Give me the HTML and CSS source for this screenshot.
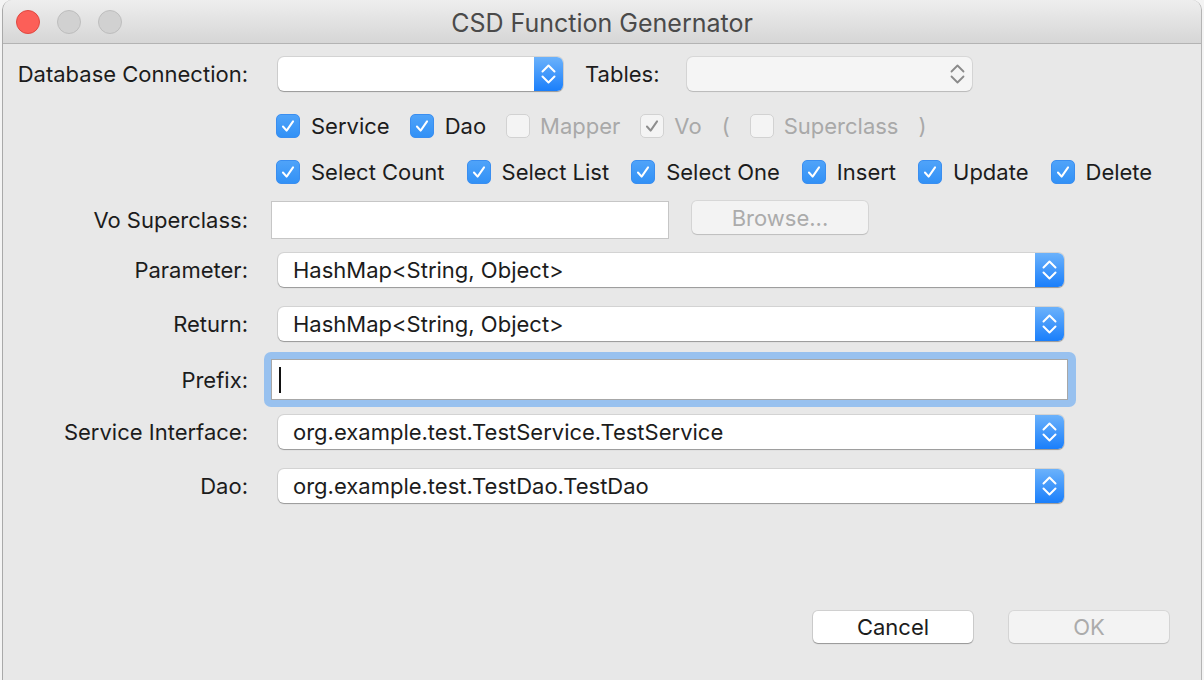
FILE: index.html
```html
<!DOCTYPE html>
<html>
<head>
<meta charset="utf-8">
<link rel="stylesheet" href="styles.css">
</head>
<body>
<div class="window">
  <div class="titlebar">
    <div class="lights">
      <span class="light close"></span>
      <span class="light off"></span>
      <span class="light off"></span>
    </div>
    <div class="title">CSD Function Genernator</div>
  </div>
  <div class="content">
    <div class="row r1">
      <div class="label">Database Connection:</div>
      <div class="combo small">
        <span class="combo-text"></span>
        <span class="stepper"><svg width="29" height="34" viewBox="0 0 29 34"><polyline points="8.5,14.5 14.5,8.5 20.5,14.5"/><polyline points="8.5,19.5 14.5,25.5 20.5,19.5"/></svg></span>
      </div>
      <div class="inline-label">Tables:</div>
      <div class="combo small disabled">
        <span class="combo-text"></span>
        <span class="stepper"><svg width="29" height="34" viewBox="0 0 29 34"><polyline points="8.5,14.5 14.5,8.5 20.5,14.5"/><polyline points="8.5,19.5 14.5,25.5 20.5,19.5"/></svg></span>
      </div>
    </div>

    <div class="row r2">
      <div class="label"></div>
      <div class="checks tight">
        <label class="check"><span class="box on"><svg viewBox="0 0 24 24"><polyline points="6.5,12.5 10.5,17 17.5,7"/></svg></span>Service</label>
        <label class="check"><span class="box on"><svg viewBox="0 0 24 24"><polyline points="6.5,12.5 10.5,17 17.5,7"/></svg></span>Dao</label>
        <label class="check dis"><span class="box"></span>Mapper</label>
        <label class="check dis"><span class="box"><svg viewBox="0 0 24 24"><polyline points="6.5,12.5 10.5,17 17.5,7"/></svg></span>Vo</label>
        <span class="paren dis">(</span>
        <label class="check dis"><span class="box"></span>Superclass</label>
        <span class="paren dis">)</span>
      </div>
    </div>

    <div class="row r3">
      <div class="label"></div>
      <div class="checks">
        <label class="check"><span class="box on"><svg viewBox="0 0 24 24"><polyline points="6.5,12.5 10.5,17 17.5,7"/></svg></span>Select Count</label>
        <label class="check"><span class="box on"><svg viewBox="0 0 24 24"><polyline points="6.5,12.5 10.5,17 17.5,7"/></svg></span>Select List</label>
        <label class="check"><span class="box on"><svg viewBox="0 0 24 24"><polyline points="6.5,12.5 10.5,17 17.5,7"/></svg></span>Select One</label>
        <label class="check"><span class="box on"><svg viewBox="0 0 24 24"><polyline points="6.5,12.5 10.5,17 17.5,7"/></svg></span>Insert</label>
        <label class="check"><span class="box on"><svg viewBox="0 0 24 24"><polyline points="6.5,12.5 10.5,17 17.5,7"/></svg></span>Update</label>
        <label class="check"><span class="box on"><svg viewBox="0 0 24 24"><polyline points="6.5,12.5 10.5,17 17.5,7"/></svg></span>Delete</label>
      </div>
    </div>

    <div class="row r4">
      <div class="label">Vo Superclass:</div>
      <div class="textfield short"></div>
      <div class="button disabled browse">Browse...</div>
    </div>

    <div class="row r5">
      <div class="label">Parameter:</div>
      <div class="combo wide">
        <span class="combo-text">HashMap&lt;String, Object&gt;</span>
        <span class="stepper"><svg width="29" height="34" viewBox="0 0 29 34"><polyline points="8.5,14.5 14.5,8.5 20.5,14.5"/><polyline points="8.5,19.5 14.5,25.5 20.5,19.5"/></svg></span>
      </div>
    </div>

    <div class="row r6">
      <div class="label">Return:</div>
      <div class="combo wide">
        <span class="combo-text">HashMap&lt;String, Object&gt;</span>
        <span class="stepper"><svg width="29" height="34" viewBox="0 0 29 34"><polyline points="8.5,14.5 14.5,8.5 20.5,14.5"/><polyline points="8.5,19.5 14.5,25.5 20.5,19.5"/></svg></span>
      </div>
    </div>

    <div class="row r7">
      <div class="label">Prefix:</div>
      <div class="focus-ring">
        <div class="textfield long"><span class="caret"></span></div>
      </div>
    </div>

    <div class="row r8">
      <div class="label">Service Interface:</div>
      <div class="combo wide">
        <span class="combo-text">org.example.test.TestService.TestService</span>
        <span class="stepper"><svg width="29" height="34" viewBox="0 0 29 34"><polyline points="8.5,14.5 14.5,8.5 20.5,14.5"/><polyline points="8.5,19.5 14.5,25.5 20.5,19.5"/></svg></span>
      </div>
    </div>

    <div class="row r9">
      <div class="label">Dao:</div>
      <div class="combo wide">
        <span class="combo-text">org.example.test.TestDao.TestDao</span>
        <span class="stepper"><svg width="29" height="34" viewBox="0 0 29 34"><polyline points="8.5,14.5 14.5,8.5 20.5,14.5"/><polyline points="8.5,19.5 14.5,25.5 20.5,19.5"/></svg></span>
      </div>
    </div>

    <div class="buttons">
      <div class="button">Cancel</div>
      <div class="button disabled">OK</div>
    </div>
  </div>
</div>
</body>
</html>
```

FILE: styles.css
```css
* { box-sizing: border-box; }
html, body {
  margin: 0;
  padding: 0;
  width: 1204px;
  height: 680px;
  overflow: hidden;
  background: #f4f4f4;
  font-family: Inter, "Liberation Sans", sans-serif;
  font-size: 22px;
  color: #1c1c1c;
}
.window {
  margin-left: 2px;
  width: 1200px;
  height: 680px;
  background: #e8e8e8;
  border-left: 1px solid #a9a9a9;
  border-right: 1px solid #b4b4b4;
  border-top-left-radius: 10px;
  border-top-right-radius: 10px;
  display: flex;
  flex-direction: column;
  overflow: hidden;
}
.titlebar {
  height: 44px;
  flex: none;
  background: linear-gradient(#eeeeee, #d6d6d6);
  border-bottom: 1px solid #b3b3b3;
  display: flex;
  align-items: center;
  position: relative;
}
.lights {
  display: flex;
  gap: 17px;
  padding-left: 13px;
}
.light {
  width: 24px;
  height: 24px;
  border-radius: 50%;
  display: block;
}
.light.close {
  background: #fc5f58;
  border: 1px solid #df4840;
}
.light.off {
  background: #d1d1d1;
  border: 1px solid #bdbdbd;
}
.title {
  position: absolute;
  left: 0;
  right: 0;
  top: 0;
  line-height: 46px;
  text-align: center;
  font-size: 25px;
  color: #4a4a4a;
}
.content {
  flex: 1;
  display: flex;
  flex-direction: column;
  padding-bottom: 37px;
}
.row {
  display: flex;
  align-items: center;
  height: 34px;
  flex: none;
}
.r1 { margin-top: 13px; }
.r2 { margin-top: 18px; }
.r3 { margin-top: 12px; }
.r4 { margin-top: 12px; height: 38px; }
.r5 { margin-top: 14px; }
.r6 { margin-top: 20px; }
.r7 { margin-top: 11px; height: 55px; }
.r8 { margin-top: 8px; }
.r9 { margin-top: 20px; }
.label {
  width: 245px;
  flex: none;
  text-align: right;
  white-space: nowrap;
  margin-right: 23px;
}
.combo {
  height: 34px;
  background: #fff;
  border-radius: 6px;
  box-shadow: 0 0 0 1px rgba(0,0,0,0.09), 0 1px 1px 0 rgba(0,0,0,0.28);
  display: flex;
  align-items: center;
  margin-left: 7px;
  flex: none;
}
.combo.small { width: 285px; }
.combo.wide { width: 786px; }
.combo-text {
  flex: 1;
  padding-left: 15px;
  white-space: nowrap;
}
.stepper {
  width: 29px;
  height: 34px;
  flex: none;
  border-radius: 0 6px 6px 0;
  background: linear-gradient(#6bb2fb, #1a7ffb);
  display: block;
}
.stepper svg { display: block; }
.stepper polyline {
  fill: none;
  stroke: #fff;
  stroke-width: 2;
  stroke-linecap: round;
  stroke-linejoin: round;
}
.combo.disabled {
  background: #f5f5f5;
  box-shadow: 0 0 0 1px rgba(0,0,0,0.07), 0 1px 1px 0 rgba(0,0,0,0.14);
  margin-left: 27px;
}
.combo.disabled .stepper { background: none; }
.combo.disabled .stepper polyline { stroke: #8a8a8a; stroke-width: 1.8; }
.inline-label {
  margin-left: 22px;
  white-space: nowrap;
}
.checks {
  display: flex;
  align-items: center;
  gap: 22px;
  margin-left: 5px;
}
.checks.tight { gap: 20px; }
.check {
  display: flex;
  align-items: center;
  gap: 11px;
  white-space: nowrap;
}
.tight .check.dis { gap: 10px; }
.box {
  width: 24px;
  height: 24px;
  border-radius: 5px;
  flex: none;
  background: #f4f4f4;
  border: 1px solid #d2d2d2;
  display: block;
}
.box svg { width: 22px; height: 22px; display: block; }
.box polyline {
  fill: none;
  stroke: #8e8e8e;
  stroke-width: 2.2;
  stroke-linecap: round;
  stroke-linejoin: round;
}
.box.on {
  background: linear-gradient(#4fa3f9, #3291f6);
  border: 1px solid #3a8ef0;
}
.box.on polyline { stroke: #fff; }
.dis { color: #a9a9a9; }
.paren { white-space: nowrap; }
.textfield {
  background: #fff;
  border: 1px solid #c6c6c6;
  flex: none;
}
.textfield.short {
  width: 398px;
  height: 38px;
}
.focus-ring {
  margin-left: -7px;
  width: 812px;
  height: 55px;
  padding: 7px 8px 7px 7px;
  background: #98c1ef;
  border-radius: 7px;
  flex: none;
}
.textfield.long {
  width: 797px;
  height: 41px;
  border-color: #a7a7a7;
  display: flex;
  align-items: center;
  padding-left: 7px;
}
.caret {
  width: 2px;
  height: 26px;
  background: #111;
  display: block;
}
.buttons {
  margin-top: auto;
  display: flex;
  justify-content: flex-end;
  gap: 36px;
  padding-right: 32px;
}
.button {
  width: 160px;
  height: 32px;
  background: #fff;
  border-radius: 5px;
  box-shadow: 0 0 0 1px rgba(0,0,0,0.1), 0 1px 1px 0 rgba(0,0,0,0.28);
  display: flex;
  align-items: center;
  justify-content: center;
  flex: none;
}
.button.disabled {
  background: #f3f3f3;
  color: #ababab;
  box-shadow: 0 0 0 1px rgba(0,0,0,0.07), 0 1px 1px 0 rgba(0,0,0,0.12);
}
.row .button.browse {
  margin-left: 23px;
  width: 176px;
  height: 33px;
  margin-top: -5px;
}
```
